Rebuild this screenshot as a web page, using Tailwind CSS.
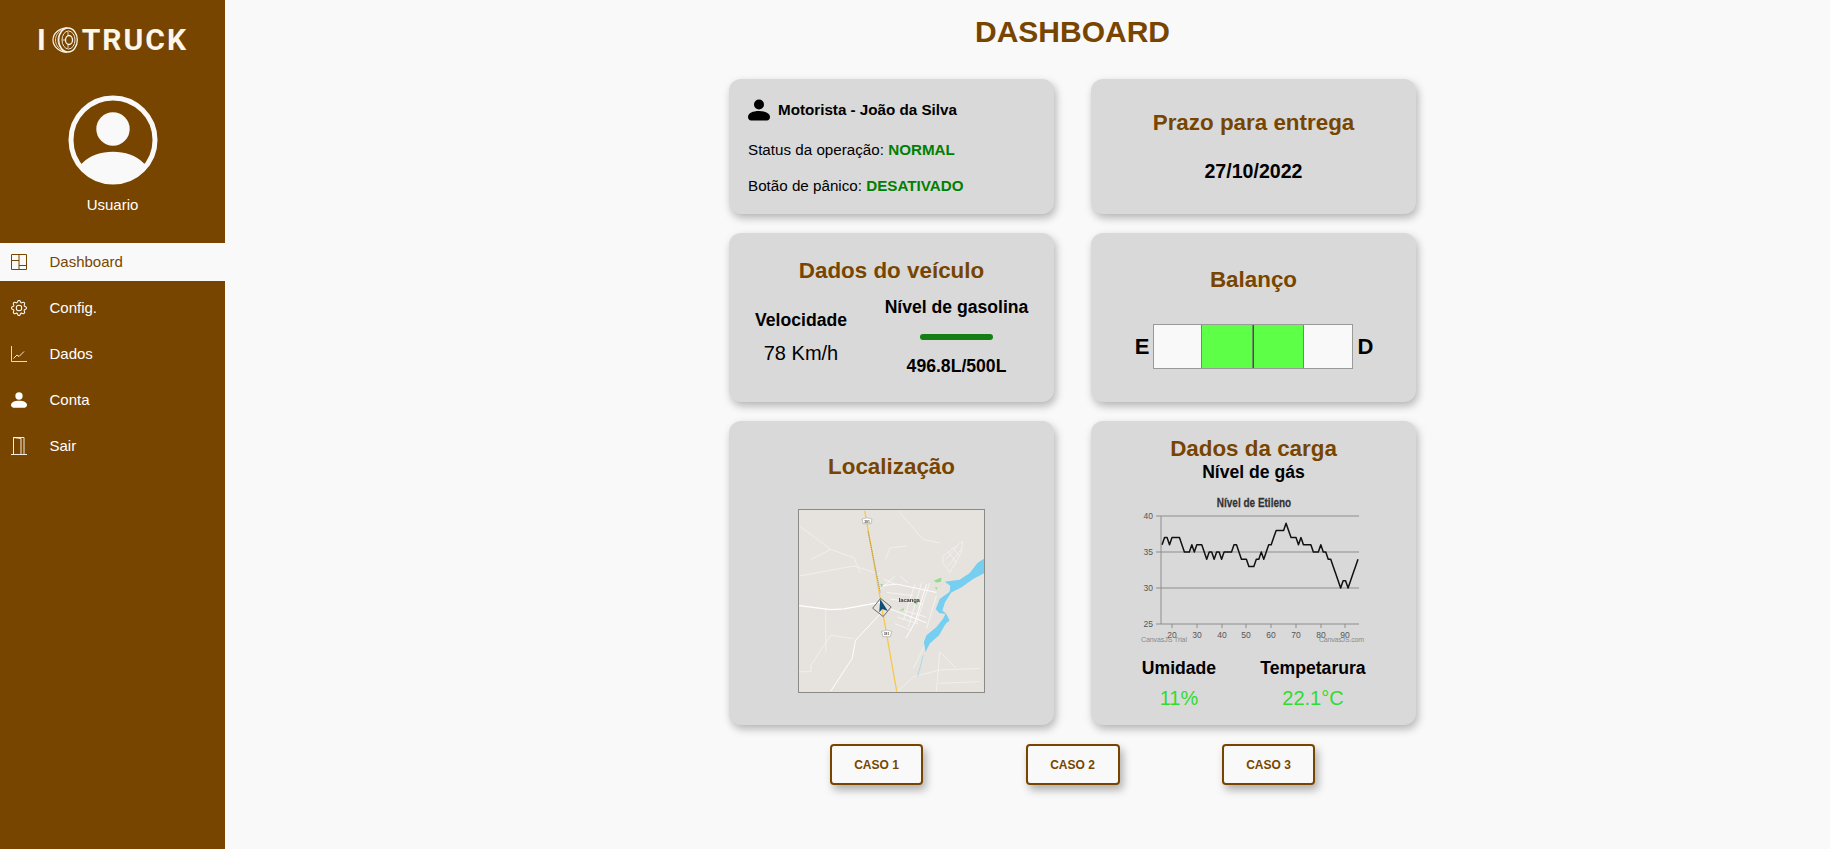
<!DOCTYPE html>
<html lang="pt">
<head>
<meta charset="utf-8">
<title>Dashboard</title>
<script src="https://cdn.jsdelivr.net/npm/@tailwindcss/browser@4"></script>
</head>
<body class="bg-[#f9f9f9] font-['Liberation_Sans',Arial,sans-serif] text-black">
<div class="flex h-[849px] w-[1830px] overflow-hidden">
  <aside class="flex w-[225px] shrink-0 flex-col bg-[#784500] text-white">
    <div class="mt-[28px] flex h-[24px] items-center pl-[37px] text-[#fdf6ea]">
      <span class="font-['Roboto',sans-serif] text-[30px] font-bold leading-none">I</span>
      <svg class="ml-[6px] mr-[4px]" width="26" height="26" viewBox="0 0 26 26" fill="none" stroke="currentColor">
        <path d="M15 .8C8 .8 1 6 1 13s7 12.200 14 12.200" stroke-width="1.200"/>
        <path d="M11 2.500C5.500 5 3.500 9 3.500 13s2 8 7.500 10.500M13 2C8 4.500 6 9 6 13s2 8.500 7 11" stroke-width=".8"/>
        <ellipse cx="16" cy="13" rx="9.300" ry="12" stroke-width="1.300"/>
        <ellipse cx="16.500" cy="13" rx="6.500" ry="9" stroke-width=".9"/>
        <ellipse cx="17" cy="13" rx="3.500" ry="4.500" stroke-width="1.300"/>
        <path d="M16 5v3M16 18v3M10.500 13h2.500" stroke-width=".8"/>
      </svg>
      <span class="font-['Roboto',sans-serif] text-[30px] font-bold leading-none tracking-[2px]">TRUCK</span>
    </div>
    <svg class="ml-[68px] mt-[43px]" width="90" height="90" viewBox="0 0 90 90" fill="#f9f9f9">
      <circle cx="45" cy="45" r="42" fill="none" stroke="#f9f9f9" stroke-width="5"/>
      <circle cx="45" cy="34" r="16.700"/>
      <path d="M11 71 14.500 68C22 60 33 56.700 45 56.700S68 60 75.500 68L79 71A42 42 0 0 1 11 71Z"/>
    </svg>
    <p class="mt-[11px] text-center text-[15px] leading-[17px]">Usuario</p>
    <nav class="mt-[30px] flex flex-col gap-[8px] text-[15px]">
      <a class="flex h-[38px] items-center gap-[22.5px] bg-[#f9f9f9] pl-[11px] text-[#784500]">
        <svg width="16" height="16" viewBox="0 0 16 16" fill="none" stroke="currentColor"><path d="M.5.500h15v15H.5zM8 .5v15M.5 6.500H8M8 11.500h7.500"/></svg>
        Dashboard
      </a>
      <a class="flex h-[38px] items-center gap-[22.5px] pl-[11px]">
        <svg width="16" height="16" viewBox="0 0 16 16" fill="currentColor"><path d="M8 4.754a3.246 3.246 0 1 0 0 6.492 3.246 3.246 0 0 0 0-6.492zM5.754 8a2.246 2.246 0 1 1 4.492 0 2.246 2.246 0 0 1-4.492 0z"/><path d="M9.796 1.343c-.527-1.790-3.065-1.790-3.592 0l-.094.319a.873.873 0 0 1-1.255.52l-.292-.16c-1.640-.892-3.433.902-2.540 2.541l.159.292a.873.873 0 0 1-.52 1.255l-.319.094c-1.790.527-1.790 3.065 0 3.592l.319.094a.873.873 0 0 1 .52 1.255l-.16.292c-.892 1.640.901 3.434 2.541 2.540l.292-.159a.873.873 0 0 1 1.255.52l.094.319c.527 1.790 3.065 1.790 3.592 0l.094-.319a.873.873 0 0 1 1.255-.52l.292.16c1.640.893 3.434-.902 2.540-2.541l-.159-.292a.873.873 0 0 1 .52-1.255l.319-.094c1.790-.527 1.790-3.065 0-3.592l-.319-.094a.873.873 0 0 1-.52-1.255l.16-.292c.893-1.640-.902-3.433-2.541-2.540l-.292.159a.873.873 0 0 1-1.255-.52l-.094-.319zm-2.633.283c.246-.835 1.428-.835 1.674 0l.094.319a1.873 1.873 0 0 0 2.693 1.115l.291-.16c.764-.415 1.600.42 1.184 1.185l-.159.292a1.873 1.873 0 0 0 1.116 2.692l.318.094c.835.246.835 1.428 0 1.674l-.319.094a1.873 1.873 0 0 0-1.115 2.693l.16.291c.415.764-.42 1.600-1.185 1.184l-.291-.159a1.873 1.873 0 0 0-2.693 1.116l-.094.318c-.246.835-1.428.835-1.674 0l-.094-.319a1.873 1.873 0 0 0-2.692-1.115l-.292.16c-.764.415-1.600-.42-1.184-1.185l.159-.291A1.873 1.873 0 0 0 1.945 8.930l-.319-.094c-.835-.246-.835-1.428 0-1.674l.319-.094A1.873 1.873 0 0 0 3.060 4.377l-.16-.292c-.415-.764.42-1.600 1.185-1.184l.292.159a1.873 1.873 0 0 0 2.692-1.115l.094-.319z"/></svg>
        Config.
      </a>
      <a class="flex h-[38px] items-center gap-[22.5px] pl-[11px]">
        <svg width="16" height="16" viewBox="0 0 16 16" fill="none" stroke="currentColor"><path d="M.5 0v15.500H16" stroke-opacity=".8"/><path d="M2.500 12.500 6 9l2 1.500 5-5" stroke-width=".9"/></svg>
        Dados
      </a>
      <a class="flex h-[38px] items-center gap-[22.5px] pl-[11px]">
        <svg width="16" height="16" viewBox="0 0 22 22" fill="currentColor"><circle cx="11" cy="5.500" r="5"/><path d="M0 18c0-4 5-6 11-6s11 2 11 6c0 2-1.500 3.500-3 3.500H3C1.500 21.500 0 20 0 18z"/></svg>
        Conta
      </a>
      <a class="flex h-[38px] items-center gap-[22.5px] pl-[11px]">
        <svg width="16" height="18" viewBox="0 0 16 18" fill="none" stroke="currentColor"><path d="M0 17.500h16M2.500 17V.500h10.500V17M10 17V1.500L2.500.500" stroke-width=".9"/></svg>
        Sair
      </a>
    </nav>
  </aside>

  <main class="flex flex-1 flex-col items-center pl-[90px]">
    <h1 class="mt-[15px] text-[30px] font-bold leading-[34px] text-[#784500]">DASHBOARD</h1>
    <div class="mt-[30px] grid grid-cols-[325px_325px] grid-rows-[135px_169px_304px] gap-x-[37px] gap-y-[19px]">

      <section class="flex flex-col rounded-[12px] bg-[#d9d9d9] pl-[19px] pt-[21px] text-[15.2px] shadow-[2px_4px_8px_rgba(0,0,0,0.28)]">
        <div class="flex items-center gap-[8px]">
          <svg class="-mt-[1px]" width="22" height="22" viewBox="0 0 22 22" fill="#000"><circle cx="11" cy="5.500" r="5"/><path d="M0 18c0-4 5-6 11-6s11 2 11 6c0 2-1.500 3.500-3 3.500H3C1.500 21.500 0 20 0 18z"/></svg>
          <b class="-mt-[1px]">Motorista - João da Silva</b>
        </div>
        <p class="mt-[20px] leading-[16px]">Status da operação: <b class="text-[#008000]">NORMAL</b></p>
        <p class="mt-[20px] leading-[16px]">Botão de pânico: <b class="text-[#008000]">DESATIVADO</b></p>
      </section>

      <section class="flex flex-col items-center rounded-[12px] bg-[#d9d9d9] pt-[31px] shadow-[2px_4px_8px_rgba(0,0,0,0.28)]">
        <h2 class="text-[22.4px] font-bold leading-[26px] text-[#784500]">Prazo para entrega</h2>
        <p class="mt-[25px] text-[19.6px] font-bold leading-[20px]">27/10/2022</p>
      </section>

      <section class="flex flex-col rounded-[12px] bg-[#d9d9d9] pt-[25px] shadow-[2px_4px_8px_rgba(0,0,0,0.28)]">
        <h2 class="text-center text-[22.4px] font-bold leading-[26px] text-[#784500]">Dados do veículo</h2>
        <div class="mt-[13px] flex">
          <div class="ml-[8px] flex w-[128px] flex-col items-center pt-[13px]">
            <b class="text-[17.6px] leading-[20px]">Velocidade</b>
            <span class="mt-[12px] text-[20px] leading-[23px]">78 Km/h</span>
          </div>
          <div class="ml-[14px] flex w-[155px] flex-col items-center">
            <b class="text-[17.6px] leading-[20px]">Nível de gasolina</b>
            <div class="mt-[17px] h-[6px] w-[73px] rounded-full bg-[#157f15]"></div>
            <b class="mt-[16px] text-[17.6px] leading-[20px]">496.8L/500L</b>
          </div>
        </div>
      </section>

      <section class="flex flex-col items-center rounded-[12px] bg-[#d9d9d9] pt-[34px] shadow-[2px_4px_8px_rgba(0,0,0,0.28)]">
        <h2 class="text-[22.4px] font-bold leading-[26px] text-[#784500]">Balanço</h2>
        <div class="mt-[31px] flex items-center gap-[4px] pl-[1px]">
          <b class="text-[22px] leading-[25px]">E</b>
          <div class="flex h-[45px] w-[200px] border border-[#9a9a9a] bg-[#f9f9f9]">
            <div class="w-[47px]"></div>
            <div class="w-[52px] border-x border-[#6b8f62] bg-[#5dff47]"></div>
            <div class="w-[51px] border-l border-r border-r-[#6b8f62] border-l-[#3d5a38] bg-[#5dff47]"></div>
          </div>
          <b class="text-[22px] leading-[25px]">D</b>
        </div>
      </section>

      <section class="flex flex-col items-center rounded-[12px] bg-[#d9d9d9] pt-[33px] shadow-[2px_4px_8px_rgba(0,0,0,0.28)]">
        <h2 class="text-[22.4px] font-bold leading-[26px] text-[#784500]">Localização</h2>
        <svg class="mt-[29px] border border-[#8a8a86] bg-[#e6e3de]" width="187" height="184" viewBox="54 43 560 546" fill="none">
          <g class="blur-[0.4px]">
            <g stroke="#f3f2ee" stroke-width="2.500">
              <path d="M57 90 150 160 220 185 240 230M57 240 220 210 300 235M90 190 150 160M135 340V470M220 430 150 420 90 510 90 530 54 530M315 190 330 155 380 150M355 43 430 130 480 140M530 520 480 470 470 589M354 589 400 545 480 525 600 520M400 520 440 440M480 565 600 560"/>
              <path d="M490 180 550 135 545 170 510 230 490 200ZM505 165 530 200M520 155 540 180M498 190 535 150M505 210 545 160"/>
              <path stroke="#fbfaf8" stroke-width="2.200" d="M310 250 345 265M320 290 400 300M330 310 430 325M345 385 395 405M352 365 415 385M362 342 440 365M450 260 410 380M425 262 385 395M405 265 370 375M470 300 440 400M360 240 385 262M300 280 345 240"/>
            </g>
            <g stroke="#fff">
              <path d="M54 330 150 342 190 340 300 320" stroke-width="3.500"/>
              <path d="M300 270 350 265 470 290M330 340 440 382M440 265 405 380 378 428M300 355 225 435 215 490 150 589" stroke-width="2.800"/>
            </g>
            <path d="M253 43 350 590" stroke="#f6c84c" stroke-width="4"/>
            <path d="M263 105 300 290" stroke="#8f8f78" stroke-width="2.500" stroke-dasharray="4 2"/>
            <path fill="#76cef0" d="M614 188 595 200 570 232 540 252 495 258 512 270 510 288 480 310 468 340 478 352 497 355 490 370 470 395 440 420 432 440 437 470 450 445 478 420 498 385 510 375 500 355 488 345 496 320 515 290 545 275 580 250 614 232Z"/>
            <path fill="#8fdc8a" d="M462 255 485 245 484 258 470 260ZM300 265 310 265 303 275ZM358 345 370 338 372 345ZM402 320 415 320 410 328ZM465 275 474 275 470 282Z"/>
            <path d="M430 480 420 520 413 545" stroke="#9fd6ea" stroke-width="2.500"/>
            <path d="M245 68Q260 60 275 68L272 82H248ZM304 408Q320 400 335 408L330 424H308Z" fill="#fff" stroke="#8b8b85" stroke-width="1.500"/>
            <text x="260" y="79" text-anchor="middle" font-size="10" font-weight="700" fill="#55524d" font-family="Liberation Sans, Arial, sans-serif">381</text>
            <text x="319" y="419" text-anchor="middle" font-size="10" font-weight="700" fill="#55524d" font-family="Liberation Sans, Arial, sans-serif">381</text>
            <path d="M277 338 301 308 333 334 309 363Z" stroke="#55524d" stroke-width="2.500"/>
            <path d="M300 310 297 350 306 340 323 346Z" fill="#0e4d78"/>
            <text x="356" y="319" font-size="18" font-weight="700" fill="#3b3b38" textLength="64" font-family="Liberation Sans, Arial, sans-serif">Iacanga</text>
          </g>
        </svg>
      </section>

      <section class="flex flex-col rounded-[12px] bg-[#d9d9d9] pt-[15px] shadow-[2px_4px_8px_rgba(0,0,0,0.28)]">
        <h2 class="text-center text-[22.4px] font-bold leading-[26px] text-[#784500]">Dados da carga</h2>
        <p class="text-center text-[17.6px] font-bold leading-[21px]">Nível de gás</p>
        <svg class="ml-[33px] mt-[7px]" width="260" height="158" viewBox="0 0 260 158" font-family="Liberation Sans, Arial, sans-serif">
          <text transform="translate(130 17) scale(1 1.35)" text-anchor="middle" font-size="10" font-weight="700" fill="#333" stroke="#333" stroke-width=".2">Nível de Etileno</text>
          <path d="M37 26v108M32 26h203M32 62h203M32 98h203M32 134h203" stroke="#8d8d8d" stroke-width="1" fill="none"/>
          <path d="M48 134v4M73 134v4M98 134v4M122 134v4M147 134v4M172 134v4M197 134v4M221 134v4" stroke="#8d8d8d" fill="none"/>
          <g font-size="8.500" fill="#555" text-anchor="end">
            <text x="29" y="29">40</text><text x="29" y="65">35</text><text x="29" y="101">30</text><text x="29" y="137">25</text>
          </g>
          <g font-size="8.500" fill="#555" text-anchor="middle">
            <text x="48" y="148">20</text><text x="73" y="148">30</text><text x="98" y="148">40</text><text x="122" y="148">50</text><text x="147" y="148">60</text><text x="172" y="148">70</text><text x="197" y="148">80</text><text x="221" y="148">90</text>
          </g>
          <text x="17" y="152" font-size="7" fill="#8a8a8a" textLength="46">CanvasJS Trial</text>
          <text x="195" y="152" font-size="7" fill="#8a8a8a" textLength="45">CanvasJS.com</text>
          <g transform="translate(-1.6 314) scale(2.48 -7.2)">
            <polyline fill="none" stroke="#111" stroke-width="1.500" vector-effect="non-scaling-stroke" stroke-linejoin="round" points="16,36 17,37 18,37 19,36 20,37 21,37 22,37 23,37 24,36 25,35 26,35 27,35 28,36 29,35 30,36 31,36 32,36 33,35 34,34 35,35 36,35 37,34 38,35 39,35 40,34 41,35 42,35 43,35 44,35 45,36 46,36 47,35 48,34 49,34 50,34 51,33 52,33 53,33 54,34 55,34 56,35 57,34 58,35 59,36 60,36 61,37 62,38 63,38 64,38 65,38 66,39 67,38 68,37 69,37 70,37 71,36 72,37 73,36 74,36 75,36 76,36 77,35 78,35 79,35 80,36 81,35 82,35 83,34 84,34 85,33 86,32 87,31 88,30 89,31 90,31 91,30 92,31 93,32 94,33 95,34"/>
          </g>
        </svg>
        <div class="mt-[10px] flex">
          <div class="ml-[28px] flex w-[120px] flex-col items-center">
            <b class="text-[17.6px] leading-[20px]">Umidade</b>
            <span class="mt-[9px] text-[20px] leading-[23px] text-[#2fdc2f]">11%</span>
          </div>
          <div class="ml-[18px] flex w-[112px] flex-col items-center">
            <b class="text-[17.6px] leading-[20px]">Tempetarura</b>
            <span class="mt-[9px] text-[20px] leading-[23px] text-[#2fdc2f]">22.1°C</span>
          </div>
        </div>
      </section>
    </div>

    <div class="mt-[19px] flex gap-[102.5px]">
      <button class="h-[41px] w-[93px] rounded-[4px] border-2 border-[#784500] bg-[#f9f9f9] text-[12px] font-bold text-[#784500] shadow-[3px_5px_8px_rgba(0,0,0,0.3)]">CASO 1</button>
      <button class="h-[41px] w-[94px] rounded-[4px] border-2 border-[#784500] bg-[#f9f9f9] text-[12px] font-bold text-[#784500] shadow-[3px_5px_8px_rgba(0,0,0,0.3)]">CASO 2</button>
      <button class="h-[41px] w-[93px] rounded-[4px] border-2 border-[#784500] bg-[#f9f9f9] text-[12px] font-bold text-[#784500] shadow-[3px_5px_8px_rgba(0,0,0,0.3)]">CASO 3</button>
    </div>
  </main>
</div>
</body>
</html>
